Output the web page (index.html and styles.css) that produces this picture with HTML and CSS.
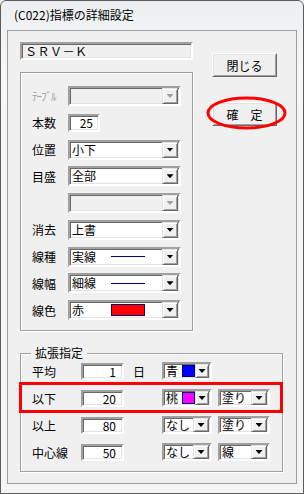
FILE: index.html
```html
<!DOCTYPE html>
<html lang="ja">
<head>
  <meta charset="UTF-8">
  <title>(C022)指標の詳細設定</title>
  <link rel="stylesheet" href="styles.css">
</head>
<body>
  <div class="window">
    <div class="titlebar">(C022)指標の詳細設定</div>

    <div class="client">
      <div class="top">
        <div class="left">
          <div class="edit name">ＳＲＶ－Ｋ</div>

          <!-- 基本設定 -->
          <div class="group main">
            <span class="label disabled">ﾃｰﾌﾞﾙ</span>
            <div class="combo off"><span class="value"></span><span class="drop"></span></div>

            <span class="label">本数</span>
            <div class="edit num">25</div>

            <span class="label">位置</span>
            <div class="combo"><span class="value">小下</span><span class="drop"></span></div>

            <span class="label">目盛</span>
            <div class="combo"><span class="value">全部</span><span class="drop"></span></div>

            <span class="label"></span>
            <div class="combo off"><span class="value"></span><span class="drop"></span></div>

            <span class="label">消去</span>
            <div class="combo"><span class="value">上書</span><span class="drop"></span></div>

            <span class="label">線種</span>
            <div class="combo"><span class="value">実線<i class="line"></i></span><span class="drop"></span></div>

            <span class="label">線幅</span>
            <div class="combo"><span class="value">細線<i class="line"></i></span><span class="drop"></span></div>

            <span class="label">線色</span>
            <div class="combo"><span class="value">赤<i class="swatch red wide"></i></span><span class="drop"></span></div>
          </div>
        </div>

        <div class="right">
          <div class="btn">閉じる</div>
          <div class="confirm">
            <div class="btn">確　定</div>
            <svg class="mark" width="81" height="34" viewBox="0 0 81 34">
              <ellipse cx="40.5" cy="17" rx="38.5" ry="15" fill="none" stroke="#f00" stroke-width="3"/>
            </svg>
          </div>
        </div>
      </div>

      <!-- 拡張指定 -->
      <div class="group ext">
        <span class="legend">拡張指定</span>

        <div class="row">
          <span class="label">平均</span>
          <div class="edit small">1</div>
          <span class="unit">日</span>
          <div class="combo mini"><span class="value">青<i class="swatch blue"></i></span><span class="drop"></span></div>
        </div>
        <div class="row">
          <span class="label">以下</span>
          <div class="edit small">20</div>
          <span class="unit"></span>
          <div class="combo mini"><span class="value">桃<i class="swatch pink"></i></span><span class="drop"></span></div>
          <div class="combo mini fill"><span class="value">塗り</span><span class="drop"></span></div>
        </div>
        <div class="row">
          <span class="label">以上</span>
          <div class="edit small">80</div>
          <span class="unit"></span>
          <div class="combo mini"><span class="value">なし</span><span class="drop"></span></div>
          <div class="combo mini fill"><span class="value">塗り</span><span class="drop"></span></div>
        </div>
        <div class="row">
          <span class="label">中心線</span>
          <div class="edit small">50</div>
          <span class="unit"></span>
          <div class="combo mini"><span class="value">なし</span><span class="drop"></span></div>
          <div class="combo mini fill"><span class="value">線</span><span class="drop"></span></div>
        </div>

        <div class="highlight"></div>
      </div>
    </div>
  </div>
</body>
</html>
```

FILE: styles.css
```css
* {
  margin: 0;
  padding: 0;
  box-sizing: border-box;
}
body {
  font-family: "Noto Sans CJK JP", "DejaVu Sans", sans-serif;
  font-size: 12px;
  color: #000;
  background: #fff;
}
.window {
  width: 304px;
  height: 494px;
  border: 1px solid #5c5c5c;
  border-radius: 6px 6px 0 0;
  background: linear-gradient(to bottom, #eceef1, #f5f6f7 60px, #f3f4f5);
  padding: 0 6px 9px 6px;
}
.titlebar {
  height: 29px;
  line-height: 27px;
  padding-left: 7px;
  font-size: 12px;
}
.client {
  height: 454px;
  border: 1px solid #9c9c9c;
  background: #f0f0f0;
  padding: 11px 0 0 12px;
}
.top {
  display: flex;
}
.right {
  margin-left: 19px;
  padding-top: 11px;
  display: flex;
  flex-direction: column;
  gap: 25px;
}

/* sunken edit box */
.edit {
  height: 18px;
  border: 2px solid;
  border-color: #a0a0a0 #fff #fff #a0a0a0;
  box-shadow: inset 1px 1px 0 #696969, inset -1px -1px 0 #e3e3e3;
  background: #fff;
  line-height: 14px;
  padding: 0 4px 0 3px;
}
.edit.name {
  width: 173px;
  height: 18px;
  background: #f0f0f0;
  letter-spacing: 0.5px;
}
.edit.num {
  width: 32px;
  text-align: right;
  padding-right: 5px;
}
.edit.small {
  width: 43px;
  height: 17px;
  text-align: right;
  padding-right: 6px;
  line-height: 13px;
}

/* group boxes */
.group {
  border: 1px solid #a0a0a0;
  box-shadow: 1px 1px 0 #fff, inset 1px 1px 0 #fff;
}
.group.main {
  width: 173px;
  height: 259px;
  margin-top: 12px;
  padding: 13px 0 0 11px;
  display: grid;
  grid-template-columns: 36px 113px;
  grid-auto-rows: 20px;
  row-gap: 6.75px;
  align-items: center;
}
.label {
  white-space: nowrap;
}
.label.disabled {
  color: #a0a0a0;
  font-size: 11px;
  letter-spacing: -1px;
}

/* combo box */
.combo {
  height: 20px;
  border: 2px solid;
  border-color: #a0a0a0 #fff #fff #a0a0a0;
  box-shadow: inset 1px 1px 0 #696969, inset -1px -1px 0 #e3e3e3;
  background: #fff;
  display: flex;
  align-items: center;
  padding: 1px 1px 1px 2px;
}
.combo .value {
  flex: 1;
  display: flex;
  align-items: center;
  line-height: 14px;
  white-space: nowrap;
}
.combo .drop {
  width: 16px;
  height: 16px;
  background: #f0f0f0;
  border: 1px solid;
  border-color: #e3e3e3 #696969 #696969 #e3e3e3;
  box-shadow: inset 1px 1px 0 #fff, inset -1px -1px 0 #a0a0a0;
  display: flex;
  justify-content: center;
  align-items: center;
}
.combo .drop::after {
  content: "";
  width: 7px;
  height: 4px;
  background: #000;
  clip-path: polygon(0 0, 100% 0, 50% 100%);
}
.combo.off {
  background: #f0f0f0;
}
.combo.off .drop::after {
  background: #a0a0a0;
}
.line {
  width: 34px;
  height: 1px;
  background: #000080;
  margin-left: 15px;
}
.swatch {
  border: 1px solid #000080;
}
.swatch.wide {
  width: 34px;
  height: 12px;
  margin-left: 27px;
}
.swatch.red {
  background: #f00;
}
.swatch.blue {
  background: #00f;
  width: 13px;
  height: 12px;
  margin-left: 4px;
}
.swatch.pink {
  background: #f0f;
  width: 13px;
  height: 12px;
  margin-left: 4px;
}

/* buttons */
.btn {
  width: 65px;
  height: 24px;
  border: 1px solid;
  border-color: #fff #696969 #696969 #fff;
  box-shadow: inset 1px 1px 0 #e3e3e3, inset -1px -1px 0 #a0a0a0;
  background: #f0f0f0;
  display: flex;
  justify-content: center;
  align-items: center;
  font-size: 12px;
}
.confirm {
  position: relative;
}
.mark {
  position: absolute;
  left: -6px;
  top: -6px;
}

/* 拡張指定 */
.group.ext {
  position: relative;
  width: 263px;
  height: 119px;
  margin-top: 22px;
  padding: 8px 0 0 11px;
  display: flex;
  flex-direction: column;
  gap: 9px;
}
.legend {
  position: absolute;
  top: -8px;
  left: 10px;
  padding: 0 4px;
  background: #f0f0f0;
  line-height: 14px;
}
.row {
  display: flex;
  align-items: center;
  height: 18px;
}
.row .label {
  width: 49px;
}
.unit {
  width: 38px;
  padding-left: 9px;
}
.combo.mini {
  width: 50px;
  height: 18px;
  padding-top: 0;
  padding-bottom: 0;
}
.combo.mini .drop {
  height: 14px;
}
.combo.fill {
  width: 52px;
  margin-left: 6px;
}
.highlight {
  position: absolute;
  left: -2px;
  top: 28px;
  width: 264px;
  height: 31px;
  border: 3px solid #f00;
}
```
